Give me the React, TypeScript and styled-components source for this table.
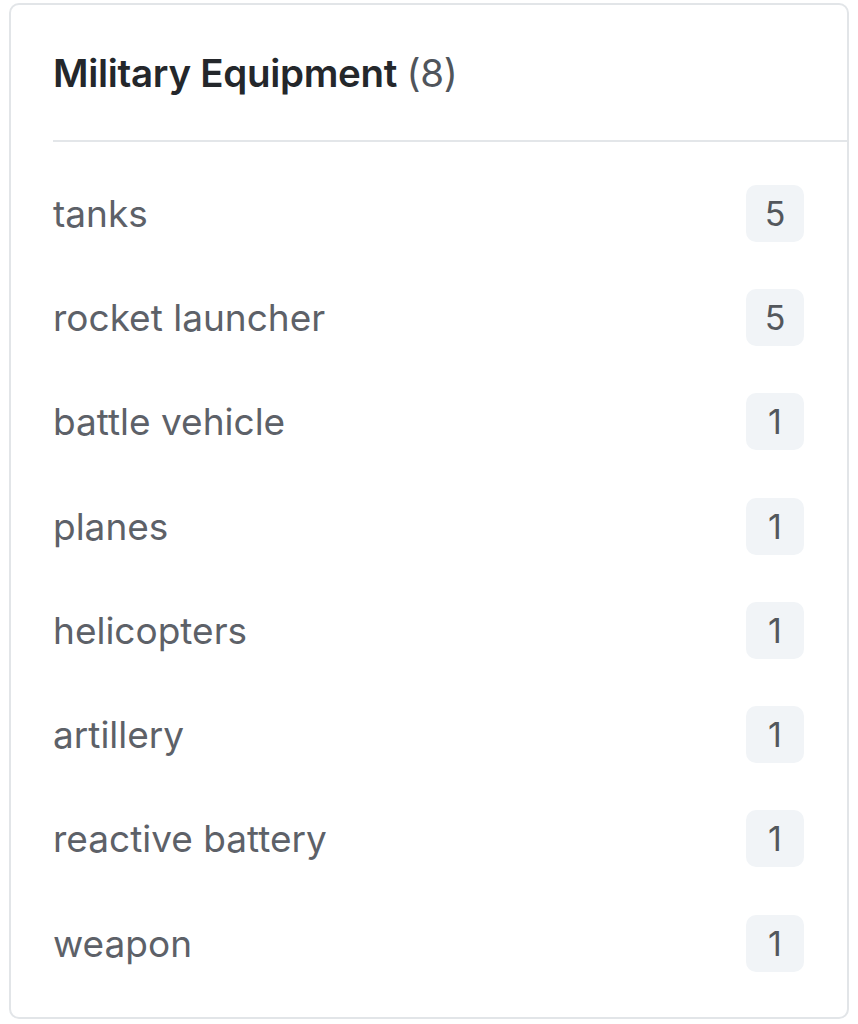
import React from "react";
import styled, { createGlobalStyle } from "styled-components";

const Global = createGlobalStyle`
  html, body { margin: 0; padding: 0; background: #ffffff; }
  body { font-family: "Inter", "Noto Sans", sans-serif; }
`;

const Card = styled.section`
  box-sizing: border-box;
  width: 840px;
  height: 1016px;
  margin: 3px 0 0 9px;
  border: 2px solid #e2e5e8;
  border-radius: 10px;
  background: #fff;
  display: flex;
  flex-direction: column;
`;

const Header = styled.header`
  box-sizing: border-box;
  height: 137px;
  margin-left: 42px;
  border-bottom: 2px solid #e3e6e9;
  display: flex;
  align-items: center;
`;

const Title = styled.h2`
  margin: 0;
  font-size: 38.5px;
  font-weight: 600;
  color: #24272b;
  letter-spacing: -0.3px;
`;

const Count = styled.span`
  font-weight: 400;
  color: #50555b;
`;

const List = styled.ul`
  list-style: none;
  margin: 0;
  padding: 19px 43px 0 42px;
  display: flex;
  flex-direction: column;
`;

const Row = styled.li`
  height: 104.3px;
  display: flex;
  align-items: center;
  justify-content: space-between;
`;

const Label = styled.span`
  font-size: 37px;
  color: #5d6168;
`;

const Badge = styled.span`
  width: 58px;
  height: 57px;
  border-radius: 10px;
  background: #f1f4f7;
  display: flex;
  align-items: center;
  justify-content: center;
  font-size: 34px;
  color: #53575c;
`;

const items: [string, number][] = [
  ["tanks", 5],
  ["rocket launcher", 5],
  ["battle vehicle", 1],
  ["planes", 1],
  ["helicopters", 1],
  ["artillery", 1],
  ["reactive battery", 1],
  ["weapon", 1],
];

export default function App() {
  return (
    <>
      <Global />
      <Card>
        <Header>
          <Title>
            Military Equipment <Count>(8)</Count>
          </Title>
        </Header>
        <List>
          {items.map(([name, n]) => (
            <Row key={name}>
              <Label>{name}</Label>
              <Badge>{n}</Badge>
            </Row>
          ))}
        </List>
      </Card>
    </>
  );
}
